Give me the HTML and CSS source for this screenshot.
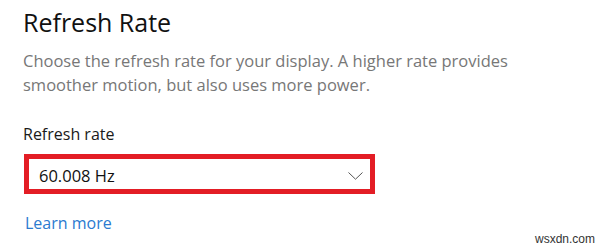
FILE: index.html
```html
<!DOCTYPE html>
<html lang="en">
<head>
    <meta charset="UTF-8">
    <title>Refresh Rate</title>
    <link rel="stylesheet" href="styles.css">
</head>
<body>
<div class="page">
    <h2>Refresh Rate</h2>
    <p class="description">Choose the refresh rate for your display. A higher rate provides<br>smoother motion, but also uses more power.</p>

    <div class="field">
        <label for="rate">Refresh rate</label>
        <div class="select" id="rate">
            <span class="value">60.008 Hz</span>
            <svg class="chevron" width="15" height="8" viewBox="0 0 15 8">
                <path d="M0.5 0.5 L7.5 7.2 L14.5 0.5" fill="none" stroke="#555" stroke-width="1"/>
            </svg>
        </div>
    </div>

    <a class="link" href="#">Learn more</a>
</div>
<div class="watermark">wsxdn.com</div>
</body>
</html>
```

FILE: styles.css
```css
body {
    font-family: "Open Sans", "Noto Sans", sans-serif;
    margin: 0;
    background-color: #fff;
    color: #000;
    width: 607px;
    height: 250px;
    overflow: hidden;
    position: relative;
}

.page {
    padding: 6px 0 0 23px;
}

h2 {
    font-size: 25px;
    font-weight: normal;
    margin: 0;
    line-height: 32px;
    color: #111;
}

.description {
    font-size: 16.5px;
    line-height: 24px;
    color: #777;
    margin: 11px 0 0;
    white-space: nowrap;
}

.field {
    margin-top: 26px;
}

.field label {
    display: block;
    font-size: 16px;
    line-height: 22px;
    color: #1a1a1a;
    margin-bottom: 9px;
}

.select {
    box-sizing: content-box;
    width: 324px;
    height: 27px;
    margin-left: 1px;
    padding: 3px 7px 0 10px;
    border: 5px solid #e31d25;
    display: flex;
    align-items: center;
    justify-content: space-between;
}

.select .value {
    font-size: 16.5px;
    color: #111;
}

.chevron {
    display: block;
}

.link {
    display: inline-block;
    margin: 18px 0 0 2px;
    font-size: 16px;
    line-height: 22px;
    color: #2b7ad0;
    text-decoration: none;
}

.watermark {
    position: absolute;
    right: 12px;
    bottom: 4px;
    font-family: "Liberation Sans", Arial, sans-serif;
    font-size: 12px;
    line-height: 14px;
    color: #333;
}
```
